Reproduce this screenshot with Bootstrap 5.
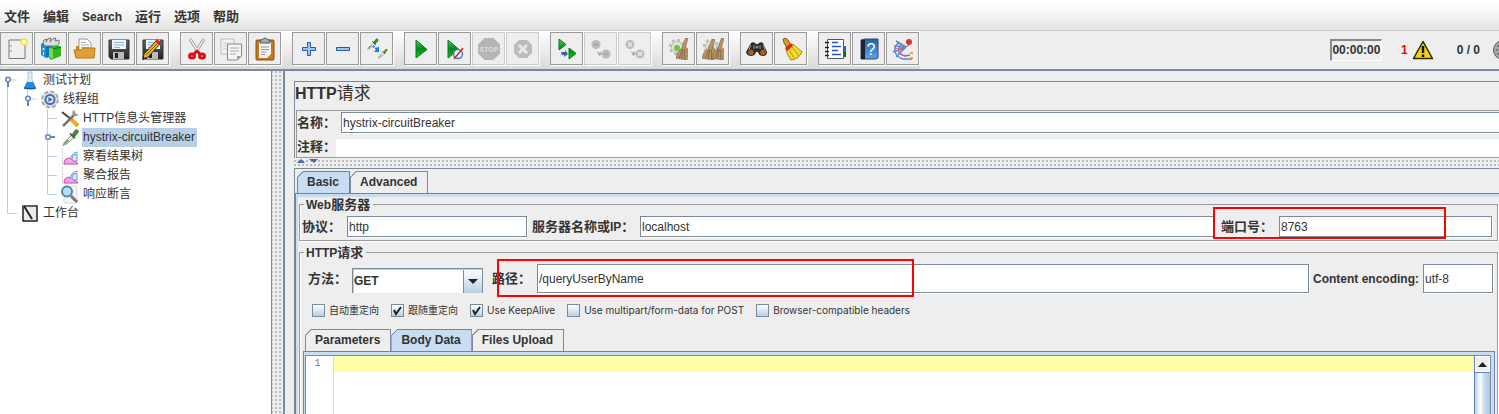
<!DOCTYPE html>
<html lang="zh-CN">
<head>
<meta charset="utf-8">
<meta name="viewport" content="width=device-width, initial-scale=1">
<title>HTTP请求</title>
<link href="https://cdn.jsdelivr.net/npm/bootstrap@5.3.0/dist/css/bootstrap.min.css" rel="stylesheet">
<script src="https://cdn.jsdelivr.net/npm/bootstrap@5.3.0/dist/js/bootstrap.bundle.min.js"></script>
<style>
:root{--steel:#7a8a99;--blue:#6382bf;--sky:#c8ddf2;--face:#eee;--ink:#333}
body{font-family:"Liberation Sans","Noto Sans CJK SC",sans-serif;font-size:12px;line-height:14px;color:var(--ink);background:var(--face)}
.app-frame{height:100vh;overflow:hidden}
.menu-strip{height:31px;padding:4px 4px 0;background:linear-gradient(#fff 5px,#e2e2e2);border-bottom:1px solid #ccc;gap:13px}
.menu-strip .nav-link{padding:0;color:var(--ink);font-weight:700;font-size:13px;line-height:26px}
.menu-strip .latin,.cap .latin{font-size:12px}
.tool-strip{height:38px;background:var(--face)}
.tool-groups{gap:11px;padding:1px 1px 0 0;background:linear-gradient(#fff,#dadada)}
.tool-set{gap:1px}
.tool{width:33px;height:33px;padding:0;border:1px solid #999;background:var(--face);box-shadow:1px 1px 0 #fff;display:flex;align-items:center;justify-content:center}
.tool:disabled{border-color:#ccc}
.tool svg{width:24px;height:24px}
.status{font-weight:700;gap:19px}
.threads{gap:13px}
.alarm{color:red}
.timer{width:52px;height:22px;line-height:19px;border:1px solid #fff;border-top:2px solid #888;border-left:2px solid #888;text-align:center;white-space:nowrap}
.work{border-top:2px solid var(--steel)}
.tree-pane{width:272px;background:#fff;border-right:1px solid var(--steel)}
.tree-row{height:19px}
.tree-row a{color:var(--ink);text-decoration:none;line-height:17px;padding:1px 2px 1px 1px;margin-left:2px}
.tree-row a.active{background:#b8cfe5}
.ico{width:20px;height:19px}
.dots-v{width:11px;background:radial-gradient(circle at 1px 1px,#bbb 0 1px,transparent 1px) 3px 0/4px 4px}
.dots-h{height:10px;background:radial-gradient(circle at 1px 1px,#bbb 0 1px,transparent 1px) 0 2px/4px 4px}
.detail{border-left:2px solid var(--steel);padding:10px 0 0 9px}
.head-box{border:1px solid var(--steel);border-right:0;border-bottom:0}
.head-box h1{font-size:16px;line-height:24px;height:28px;margin:0;font-weight:700}
.head-box h1 span{font-weight:400;font-size:17px}
.head-form{border:1px solid #999;border-right:0;margin-left:1px}
.head-line{padding-top:1px;gap:5px}
.note-line{padding-top:4px}
.cap{font-weight:700;font-size:13px;line-height:20px;white-space:nowrap}
.field{height:21px;border:1px solid var(--steel);border-radius:0;box-shadow:1px 1px 0 #fff;padding:0 1px;background:#fff;color:var(--ink);font-size:12px;min-width:0}
.head-line .field{border-right:0}
.plain{height:18px;border:0;background:#fff;min-width:0}
.tall{height:29px}
.tab-outer{border:1px solid var(--steel);border-right:0;border-bottom:0;padding-top:2px}
.tabs{padding-left:2px}
.tabs.inner{padding-left:5px;margin-top:2px}
.tab{height:22px;padding:0 10px 2px 9px;border:1px solid var(--steel);border-bottom:0;font-weight:700;font-size:12px;color:var(--ink);
 background:linear-gradient(135deg,var(--face) 4px,var(--steel) 4px 5px,var(--face) 5px) border-box;clip-path:polygon(6px 0,100% 0,100% 100%,0 100%,0 6px)}
.tab.active{border-color:var(--blue);background:linear-gradient(135deg,var(--face) 4px,var(--blue) 4px 5px,var(--sky) 5px) border-box}
.pane{border-top:1px solid var(--blue);border-left:1px solid var(--blue)}
.pane-in{border:2px solid var(--sky);border-top-width:3px;border-bottom:0;border-right:0;padding:0 1px}
.group{border:1px solid #999;box-shadow:inset 1px 0 0 #fff,1px 1px 0 #fff;min-width:0}
.group legend{float:none;width:auto;margin:0 0 0 4px;padding:0 3px 0 2px;height:14px;line-height:16px;background:var(--face)}
.g-web{padding:5px 5px 3px 0}
.g-http{margin-top:4px;padding:5px 0 0;border-bottom:0}
.g-row{padding-right:4px}
.w-proto{width:45px;margin-left:2px}
.f-proto{width:180px}
.w-host{width:108px;margin-left:5px}
.g-port{margin-left:6px}
.w-port{width:58px}
.f-port{width:213px}
.w-method{width:44px;margin-left:8px}
.g-path{margin-left:9px}
.w-path{width:45px}
.w-enc{font-size:12px;margin:0 4px}
.f-enc{width:70px}
.pick{width:131px;height:25px;appearance:none;border:1px solid var(--steel);border-bottom:0;border-radius:0;font-size:12px;font-weight:700;color:var(--ink);padding:0 22px 0 1px;
 background:url("data:image/svg+xml,%3Csvg xmlns='http://www.w3.org/2000/svg' width='10' height='5'%3E%3Cpath d='M0 0h10L5 5z' fill='%23222'/%3E%3C/svg%3E") right 4px center/10px 5px no-repeat,linear-gradient(var(--steel),var(--steel)) right 18px top/1px 100% no-repeat,linear-gradient(#fff,#b8cfe5) right/18px 100% no-repeat,#fff;box-shadow:inset 1px 1px 0 #b8cfe5}
.opts{height:34px;font-family:Inter,"Noto Sans CJK SC",sans-serif;font-size:10px;padding-left:12px;gap:12px}
.tick{appearance:none;width:13px;height:13px;border:1px solid var(--steel);margin:0 4px 0 0;background:linear-gradient(#fff,#b8cfe5)}
.tick:checked{background:url("data:image/svg+xml,%3Csvg xmlns='http://www.w3.org/2000/svg' width='11' height='11'%3E%3Cpath d='M2 5l2 4 5-7' fill='none' stroke='%23222' stroke-width='2'/%3E%3C/svg%3E"),linear-gradient(#fff,#b8cfe5)}
.redbox{position:absolute;border:2px solid red;pointer-events:none;z-index:3}
.rb-port{left:-8px;top:-9px;bottom:-2px;right:46px}
.rb-path{left:5px;top:-5px;bottom:-4px;width:417px}
.edit-frame{border:1px solid var(--blue);border-bottom:0;margin:0 2px 0 3px}
.edit-in{border:1px solid var(--sky);border-width:3px 3px 0 1px}
.editor{border:1px solid var(--steel);border-bottom:0;background:#fff}
.gutter{width:28px;border-right:1px solid #ddd;font:10px/16px "Liberation Mono",monospace;color:#777;text-align:center;padding-right:4px}
.code{border:0;resize:none;outline:0;padding:0 2px;line-height:16px;overflow:hidden;background:linear-gradient(#ffffa9 16px,#fff 16px)}
.bar-y{width:16px;border-left:1px solid var(--blue)}
.bar-y button{height:16px;border:1px solid #fff;background:#eee;padding:0;display:flex;align-items:center;justify-content:center}
.thumb{border-top:1px solid var(--blue);background:linear-gradient(90deg,#b8cfe5,#fff 35%,#c8ddf2 60%,#a9c4e4)}
</style>
</head>
<body>
<svg class="position-absolute" width="0" height="0" aria-hidden="true">
<defs>
<linearGradient id="gg" x1="0" y1="0" x2="0" y2="1"><stop offset="0" stop-color="#5c5"/><stop offset=".5" stop-color="#082"/><stop offset="1" stop-color="#1c1"/></linearGradient>
<linearGradient id="gb" x1="0" y1="0" x2="0" y2="1"><stop offset="0" stop-color="#2464a8"/><stop offset="1" stop-color="#58a4ea"/></linearGradient>
<linearGradient id="gs" x1="0" y1="0" x2="0" y2="1"><stop offset="0" stop-color="#666"/><stop offset="1" stop-color="#222"/></linearGradient>
<symbol id="floppy" viewBox="0 0 24 24"><path d="M2 3h20v19H4l-2-2z" fill="url(#gs)" stroke="#333"/><path d="M5 3h14v9H5z" fill="#eef5fc"/><path d="M7 5.500h10M7 8h10M7 10.500h6" stroke="#8fb5d8"/><path d="M6 15h11v7H6z" fill="#bbb"/><path d="M8 16h3v5H8z" fill="#222"/></symbol>
<symbol id="gear" viewBox="0 0 24 24"><circle cx="12" cy="12" r="9.500" fill="none" stroke="#bbb" stroke-width="3" stroke-dasharray="4 3.460"/><circle cx="12" cy="12" r="7.500" fill="#e2e2e2" stroke="#aaa"/></symbol>
<symbol id="dropper" viewBox="0 0 24 24"><path d="M3 22l2-4 9-9 3 3-9 8z" fill="#e8efe8" stroke="#777"/><path d="M5 20l5-5" stroke="#5a6" stroke-width="2"/><path d="M12 7l6 6" stroke="#264a22" stroke-width="2"/><path d="M15 9l4-6q3-1 3 2l-5 6z" fill="#5aa340" stroke="#387a2a" stroke-width="2"/></symbol>
<symbol id="broom" viewBox="0 0 15 24" preserveAspectRatio="none"><path d="M12 0h3l-3 10 3 2-1 12L0 22q1-7 7-11z" fill="#b89468" stroke="#87623a" stroke-width=".7"/><path d="M8 12L4 22m5-10L7 23m4-11v11" stroke="#705030" stroke-width=".8"/></symbol>
<symbol id="chart" viewBox="0 0 20 19"><path d="M2.500 1v16h16" fill="none" stroke="#ccc" stroke-dasharray="2 1"/><path d="M4 16q0-4 4-5 4 0 5 3 4 0 5 3H4z" fill="#f4a4dc" stroke="#d04fb0"/><path d="M9 12q2 0 3-4 3-3 6-3M12 11q0-3 5-4v7q-5 1-5-3" fill="#d8e8fa" stroke="#6a98d4"/></symbol>
</defs>
</svg>

<div class="app-frame d-flex flex-column">
<nav class="menu-strip d-flex flex-shrink-0" aria-label="menu">
<a class="nav-link" href="#">文件</a><a class="nav-link" href="#">编辑</a><a class="nav-link latin" href="#">Search</a><a class="nav-link" href="#">运行</a><a class="nav-link" href="#">选项</a><a class="nav-link" href="#">帮助</a>
</nav>

<div class="tool-strip d-flex flex-shrink-0">
<div class="tool-groups d-flex">
<div class="tool-set d-flex">
<button class="tool" aria-label="New"><svg viewBox="0 0 24 24"><path d="M4 3h16v18.500H4z" fill="#efefef" stroke="#777"/><path d="M6 8v2m0 3v2" stroke="#888"/><circle cx="19" cy="5" r="3" fill="#fffbd0" stroke="#f0e050" stroke-width="1.500"/></svg></button>
<button class="tool" aria-label="Templates"><svg viewBox="0 0 24 24"><path d="M2 7l5-3v17l-5-3z" fill="#1790d4"/><path d="M7 4l7 1v14l-7 2z" fill="#0e72b8"/><path d="M4 6q0-4 4-4l-1 3q1-4 5-4l-1 4q2-4 6-4l-1 3 4-1v4l-2 2H6z" fill="#ddd" stroke="#777"/><path d="M10 11l8-3 4 2v9l-10 4-2-2z" fill="#2eb52a"/><path d="M10 11l4 1v10l-4-2z" fill="#6fdc4c"/><path d="M14 12l8-2" stroke="#087811"/><circle cx="4.500" cy="12" r="1" fill="#fff"/><path d="M4.500 15v3" stroke="#fff"/></svg></button>
<button class="tool" aria-label="Open"><svg viewBox="0 0 24 24"><path d="M3 9h5l1 3h12v9H3z" fill="#c88810"/><path d="M6 2h8l4 4v9H6z" fill="#fff" stroke="#999"/><path d="M8 5.500h5M8 8h8M8 10.500h8" stroke="#aaa"/><path d="M1 13h7l2-2h12l-1 10H3z" fill="#dfa034" stroke="#b97916"/></svg></button>
<button class="tool" aria-label="Save"><svg><use href="#floppy"/></svg></button>
<button class="tool" aria-label="Save as"><svg viewBox="0 0 24 24"><use href="#floppy"/><path d="M2 22l1-5L15 4l4 3L7 20z" fill="#eab52a" stroke="#332" /><path d="M5 18L17 6" stroke="#8a5a00"/><path d="M14 4l2-2 4 3-2 3z" fill="#d22"/><path d="M1 23l1-4 3 3z" fill="#222"/></svg></button>
</div>
<div class="tool-set d-flex">
<button class="tool" aria-label="Cut"><svg viewBox="0 0 24 24"><path d="M5 2l9 14M19 2l-9 14" stroke="#888" stroke-width="3"/><path d="M5 2l9 14M19 2l-9 14" stroke="#eee" stroke-width="1.500"/><ellipse cx="7" cy="19" rx="2.500" ry="2" fill="none" stroke="#d11" stroke-width="3"/><ellipse cx="17" cy="19" rx="2.500" ry="2" fill="none" stroke="#d11" stroke-width="3"/><path d="M9 17l3-3 3 3" fill="none" stroke="#d11" stroke-width="2.500"/></svg></button>
<button class="tool" aria-label="Copy"><svg viewBox="0 0 24 24"><path d="M2 2h13v15H2z" fill="#f2f2f2" stroke="#bbb"/><path d="M4 6h7M4 9h5M4 12h5" stroke="#ccc"/><path d="M8.500 7h14v12l-4 4h-10z" fill="#f5f5f5" stroke="#888"/><path d="M11 11h9M11 14h9M11 17h6" stroke="#aaa"/><path d="M22 19h-4v4z" fill="#999"/></svg></button>
<button class="tool" aria-label="Paste"><svg viewBox="0 0 24 24"><rect x="3" y="3" width="18" height="20" rx="1" fill="#c27b20" stroke="#8a500c"/><path d="M6 5h12v12l-4 4H6z" fill="#f4f4f4"/><path d="M8 10h8M8 12.500h8M8 15h5M8 17.500h4" stroke="#999"/><path d="M7 6V3h2q3-4 6 0h2v3z" fill="#aaa" stroke="#555"/></svg></button>
</div>
<div class="tool-set d-flex">
<button class="tool" aria-label="Expand"><svg viewBox="0 0 24 24"><path d="M10.500 5.500h3v5h5v3h-5v5h-3v-5h-5v-3h5z" fill="#9cc6f0" stroke="#255a9c"/></svg></button>
<button class="tool" aria-label="Collapse"><svg viewBox="0 0 24 24"><path d="M5.500 10.500h13v3h-13z" fill="#9cc6f0" stroke="#255a9c"/></svg></button>
<button class="tool" aria-label="Toggle"><svg viewBox="0 0 24 24"><use href="#dropper" x="1" y="0" width="13" height="14"/><use href="#dropper" x="12" y="11" width="11" height="11"/><path d="M8 9l5 4" stroke="#27d" stroke-width="2" stroke-dasharray="2 1"/><path d="M14 9v6H9z" fill="#27d"/></svg></button>
</div>
<div class="tool-set d-flex">
<button class="tool" aria-label="Start"><svg viewBox="0 0 24 24"><path d="M7 3l11 9.500L7 21z" fill="url(#gg)" stroke="#0b7a17"/></svg></button>
<button class="tool" aria-label="Start no pauses"><svg viewBox="0 0 24 24"><path d="M5 3l11 9.500L5 21z" fill="url(#gg)" stroke="#0b7a17"/><circle cx="15" cy="17" r="4.500" fill="#e8f0fa" stroke="#4a7fbd" stroke-width="1.500"/><path d="M11 22l9-11" stroke="#d22" stroke-width="1.500"/></svg></button>
<button class="tool" disabled aria-label="Stop"><svg viewBox="0 0 24 24"><path d="M7.500 1h9L23 7.500v9L16.500 23h-9L1 16.500v-9z" fill="#b5b5b5"/><text x="12" y="15" text-anchor="middle" font-size="7" font-weight="700" fill="#ddd">STOP</text></svg></button>
<button class="tool" disabled aria-label="Shutdown"><svg viewBox="0 0 24 24"><path d="M8 3h8l5 5v8l-5 5H8l-5-5V8z" fill="#bbb"/><path d="M8 8l8 8m0-8l-8 8" stroke="#e8e8e8" stroke-width="3"/></svg></button>
</div>
<div class="tool-set d-flex">
<button class="tool" aria-label="Remote start"><svg viewBox="0 0 24 24"><path d="M4 2l7 5.500L4 13zM14 11l7 5.500-7 5.500z" fill="url(#gg)" stroke="#0b7a17"/><path d="M6 15h4v-2l3 4-4 3v-2H7z" fill="#3b62a8"/></svg></button>
<button class="tool" disabled aria-label="Remote stop"><svg viewBox="0 0 24 24"><circle cx="7" cy="7.500" r="4.500" fill="#bbb"/><circle cx="17" cy="17" r="4.500" fill="#bbb"/><path d="M5 7.500h4M15 17h4" stroke="#999"/><path d="M8 14l3 2v-2l2 3-3 2" fill="#aaa"/></svg></button>
<button class="tool" disabled aria-label="Remote shutdown"><svg viewBox="0 0 24 24"><circle cx="7" cy="7.500" r="4.500" fill="#bbb"/><circle cx="17" cy="17" r="4.500" fill="#bbb"/><path d="M5 5.500l4 4m0-4l-4 4M15 15l4 4m0-4l-4 4" stroke="#e8e8e8" stroke-width="1.500"/><path d="M8 14l3 2v-2l2 3-3 2" fill="#aaa"/></svg></button>
</div>
<div class="tool-set d-flex">
<button class="tool" aria-label="Clear"><svg viewBox="0 0 24 24"><use href="#gear" x="1" y="1" width="18" height="18"/><circle cx="10" cy="11" r="3" fill="#6c3"/><use href="#broom" x="9" y="1" width="12" height="22"/></svg></button>
<button class="tool" aria-label="Clear all"><svg viewBox="0 0 24 24"><use href="#gear" x="1" y="1" width="18" height="18"/><circle cx="10" cy="11" r="3" fill="#6c3"/><use href="#broom" x="1" y="2" width="13" height="21"/><use href="#broom" x="11" y="1" width="12" height="22"/></svg></button>
</div>
<div class="tool-set d-flex">
<button class="tool" aria-label="Search"><svg viewBox="0 0 24 24"><path d="M6 6q3-2 5 1h2q2-3 5-1l4 9q0 4-4 4t-5-4h-2q-1 4-5 4t-5-4z" fill="#2a2a2a"/><path d="M6 8l-2 5m14-5l2 5M9 8v4m6-4v4" stroke="#999"/><circle cx="6" cy="15.500" r="2.800" fill="#a65c28"/><circle cx="18" cy="15.500" r="2.800" fill="#a65c28"/><circle cx="12" cy="10" r="1.500" fill="#888"/></svg></button>
<button class="tool" aria-label="Reset search"><svg viewBox="0 0 24 24"><path d="M4 2q3-2 5 1l3 5-4 3-3-5z" fill="#d79a32" stroke="#855c14"/><path d="M7 12l7-5 9 8q-3 7-11 8-4-5-5-11z" fill="#f6d92c" stroke="#a88709"/><path d="M10 13l5 8m-2-11l7 9" stroke="#b49510"/><path d="M6 11l6-5 2 3-6 5z" fill="#d22"/></svg></button>
</div>
<div class="tool-set d-flex">
<button class="tool" aria-label="Function helper"><svg viewBox="0 0 24 24"><path d="M4.500 2.500h16v19h-16z" fill="#fff" stroke="#555"/><path d="M2 5.500h4m-4 5h4m-4 4h4m-4 4h4" stroke="#222" stroke-width="1.500"/><path d="M9 5.500h6M9 9.500h9M9 13.500h6M9 17.500h9" stroke="#25b" stroke-width="1.500"/><path d="M22 9v6" stroke="#26e" stroke-width="2"/><path d="M22 15v5" stroke="#161" stroke-width="2"/></svg></button>
<button class="tool" aria-label="Help"><svg viewBox="0 0 24 24"><path d="M4 3l4-1h13v19l-3 1H4z" fill="url(#gb)" stroke="#347"/><path d="M4 3h4v19H4z" fill="#1c222c"/><text x="14" y="18" text-anchor="middle" font-size="16" fill="#fff">?</text></svg></button>
<button class="tool" aria-label="Plugins"><svg viewBox="0 0 24 24"><path d="M15 10L5 4m10 6L3 9m12 1L2 15m13-5L5 20M8 6q-5 3-4 8 1 6 8 8h9M10 8q-4 3-2 8 4 4 11 2" fill="none" stroke="#5b86cf" stroke-width="1.500"/><path d="M4 12l10-2M8 8l2 9 5 3" fill="none" stroke="#e66"/><path d="M15 10l4-3" stroke="#a44"/><circle cx="18" cy="5" r="3" fill="#d83232"/><path d="M19 21h3M19 16h3" stroke="#e9a24a" stroke-width="2"/></svg></button>
</div>
</div>
<div class="status d-flex ms-auto align-items-center">
<div class="timer">00:00:00</div>
<div class="d-flex align-items-center gap-1"><span class="alarm">1</span><svg width="22" height="20" viewBox="0 0 22 20"><path d="M11 1.500L20.500 18.500h-19z" fill="#f8d00c" stroke="#2a2505" stroke-width="1.500" stroke-linejoin="round"/><path d="M11 6v7m0 1.500V17" stroke="#111" stroke-width="2.500"/></svg></div>
<div class="threads d-flex align-items-center ps-1"><span>0 / 0</span><svg class="flex-shrink-0" width="6" height="20" viewBox="0 0 6 20"><circle cx="10" cy="10" r="9.500" fill="#aaa" stroke="#555"/><path d="M4 6h2M3 10h2m-1 4h2" stroke="#444"/></svg></div>
</div>
</div>

<main class="work d-flex flex-grow-1 overflow-hidden">
<aside class="tree-pane flex-shrink-0">
<div class="tree-row d-flex"><svg width="20" height="19"><path d="M8 9h9M7.500 14v5" stroke="#b8cfe5" fill="none"/><circle cx="8" cy="8.500" r="2.300" fill="#fff" stroke="#6382bf" stroke-width="1.500"/><path d="M8 11v5" stroke="#6382bf" stroke-width="2"/></svg><svg class="ico" viewBox="0 0 20 19"><path d="M8 1h4v7l4 10H4L8 8z" fill="#dceaf4" stroke="#b5c6d4"/><path d="M7 11h6l3 6q-6 2-12 0z" fill="#2486dc"/><path d="M4 17q6 2 12 0" stroke="#0d4c94" fill="none"/></svg><a href="#">测试计划</a></div>
<div class="tree-row d-flex"><svg width="40" height="19"><path d="M7.500 0v19M27.500 0v7M28 9h9" stroke="#b8cfe5" fill="none"/><circle cx="28" cy="8.500" r="2.300" fill="#fff" stroke="#6382bf" stroke-width="1.500"/><path d="M28 11v5" stroke="#6382bf" stroke-width="2"/></svg><svg class="ico" viewBox="0 0 20 19"><circle cx="10" cy="9.500" r="8" fill="#ddd" stroke="#aaa" stroke-width="2" stroke-dasharray="4 2.300"/><circle cx="10" cy="9.500" r="4.500" fill="#dce9f8" stroke="#4770a8" stroke-width="2"/><path d="M8.500 7l4 2.500-4 2.500z" fill="#345f9f"/></svg><a href="#">线程组</a></div>
<div class="tree-row d-flex"><svg width="60" height="19"><path d="M7.500 0v19M47.500 0v19M47 9.500h10" stroke="#b8cfe5" fill="none"/></svg><svg class="ico" viewBox="0 0 20 19"><path d="M2 3l10 8" stroke="#444" stroke-width="2"/><path d="M11 10l7 7" stroke="#e5b420" stroke-width="4"/><path d="M3 17L15 5" stroke="#777" stroke-width="2.500"/><path d="M14 1q-3 2-1 5t6-1l-3 0-1-2z" fill="#999"/></svg><a href="#">HTTP信息头管理器</a></div>
<div class="tree-row d-flex"><svg width="60" height="19"><path d="M7.500 0v19M47.500 0v19" stroke="#b8cfe5" fill="none"/><circle cx="48" cy="9" r="2.300" fill="#fff" stroke="#6382bf" stroke-width="1.500"/><path d="M50 9h5" stroke="#6382bf" stroke-width="2"/></svg><svg class="ico"><use href="#dropper" width="20" height="19"/></svg><a class="active" href="#">hystrix-circuitBreaker</a></div>
<div class="tree-row d-flex"><svg width="60" height="19"><path d="M7.500 0v19M47.500 0v19M47 9.500h10" stroke="#b8cfe5" fill="none"/></svg><svg class="ico"><use href="#chart"/></svg><a href="#">察看结果树</a></div>
<div class="tree-row d-flex"><svg width="60" height="19"><path d="M7.500 0v19M47.500 0v19M47 9.500h10" stroke="#b8cfe5" fill="none"/></svg><svg class="ico"><use href="#chart"/></svg><a href="#">聚合报告</a></div>
<div class="tree-row d-flex"><svg width="60" height="19"><path d="M7.500 0v19M47.500 0v9.500h9.500" stroke="#b8cfe5" fill="none"/></svg><svg class="ico" viewBox="0 0 20 19"><path d="M4 1h13v17H4z" fill="#f4f4f4" stroke="#ddd"/><path d="M11 11l6 6" stroke="#777" stroke-width="3"/><circle cx="7" cy="6.500" r="5" fill="#b6def6" stroke="#5186ac" stroke-width="2"/></svg><a href="#">响应断言</a></div>
<div class="tree-row d-flex"><svg width="20" height="19"><path d="M7.500 0v9.500h9.500" stroke="#b8cfe5" fill="none"/></svg><svg class="ico" viewBox="0 0 20 19"><path d="M3 2h14v15H3z" fill="#e8eaec" stroke="#222" stroke-width="1.500"/><path d="M4 2l8 13" stroke="#222" stroke-width="2"/><path d="M3 2h12" stroke="#888" stroke-dasharray="1 1"/></svg><a href="#">工作台</a></div>
</aside>
<div class="dots-v flex-shrink-0"></div>

<section class="detail d-flex flex-column flex-grow-1 overflow-hidden">
<div class="head-box flex-shrink-0">
<h1>HTTP<span>请求</span></h1>
<div class="head-form d-flex flex-column">
<div class="head-line d-flex align-items-end"><label class="cap" for="f-name">名称：</label><input class="field flex-grow-1" id="f-name" value="hystrix-circuitBreaker"></div>
<div class="note-line d-flex align-items-end"><label class="cap" for="f-note">注释：</label><input class="plain flex-grow-1" id="f-note"></div>
</div>
</div>
<div class="dots-h flex-shrink-0 d-flex"><svg width="26" height="6"><path d="M3 5l4-4 4 4zM15 1h9l-4 4z" fill="#4a6ab0"/></svg></div>

<div class="tab-outer flex-grow-1 d-flex flex-column">
<div class="tabs d-flex" role="tablist"><button class="tab active" role="tab">Basic</button><button class="tab" role="tab">Advanced</button></div>
<div class="pane d-flex flex-column flex-grow-1"><div class="pane-in d-flex flex-column flex-grow-1">

<fieldset class="group g-web">
<legend class="cap"><span class="latin">Web</span>服务器</legend>
<div class="d-flex align-items-center">
<label class="cap w-proto" for="f-proto">协议：</label><input class="field f-proto" id="f-proto" value="http">
<label class="cap w-host" for="f-host">服务器名称或<span class="latin">IP</span>：</label><input class="field flex-grow-1" id="f-host" value="localhost">
<div class="position-relative d-flex align-items-end g-port"><label class="cap w-port" for="f-port">端口号：</label><input class="field f-port" id="f-port" value="8763"><span class="redbox rb-port"></span></div>
</div>
</fieldset>

<fieldset class="group g-http d-flex flex-column flex-grow-1">
<legend class="cap"><span class="latin">HTTP</span>请求</legend>
<div class="d-flex align-items-center g-row">
<label class="cap w-method" for="f-method">方法：</label><select class="pick align-self-end" id="f-method"><option>GET</option></select>
<div class="position-relative d-flex align-items-center flex-grow-1 g-path"><label class="cap w-path" for="f-path">路径：</label><input class="field tall flex-grow-1" id="f-path" value="/queryUserByName"><span class="redbox rb-path"></span></div>
<label class="cap w-enc" for="f-enc">Content encoding:</label><input class="field tall f-enc" id="f-enc" value="utf-8">
</div>
<div class="opts d-flex align-items-center">
<div class="d-flex align-items-center"><input class="tick" type="checkbox" id="c1"><label for="c1">自动重定向</label></div>
<div class="d-flex align-items-center"><input class="tick" type="checkbox" id="c2" checked><label for="c2">跟随重定向</label></div>
<div class="d-flex align-items-center"><input class="tick" type="checkbox" id="c3" checked><label for="c3">Use KeepAlive</label></div>
<div class="d-flex align-items-center"><input class="tick" type="checkbox" id="c4"><label for="c4">Use multipart/form-data for POST</label></div>
<div class="d-flex align-items-center"><input class="tick" type="checkbox" id="c5"><label for="c5">Browser-compatible headers</label></div>
</div>
<div class="tabs inner d-flex" role="tablist"><button class="tab" role="tab">Parameters</button><button class="tab active" role="tab">Body Data</button><button class="tab" role="tab">Files Upload</button></div>
<div class="edit-frame d-flex flex-column flex-grow-1"><div class="edit-in d-flex flex-grow-1"><div class="editor d-flex flex-grow-1">
<div class="gutter flex-shrink-0">1</div>
<textarea class="code flex-grow-1" rows="1" aria-label="Body Data"></textarea>
<div class="bar-y d-flex flex-column flex-shrink-0"><button aria-label="Scroll up"><svg width="9" height="5"><path d="M0 5l4.500-5L9 5z" fill="#222"/></svg></button><div class="thumb flex-grow-1"></div></div>
</div></div></div>
</fieldset>
</div></div>
</div>
</section>
</main>
</div>
</body>
</html>
